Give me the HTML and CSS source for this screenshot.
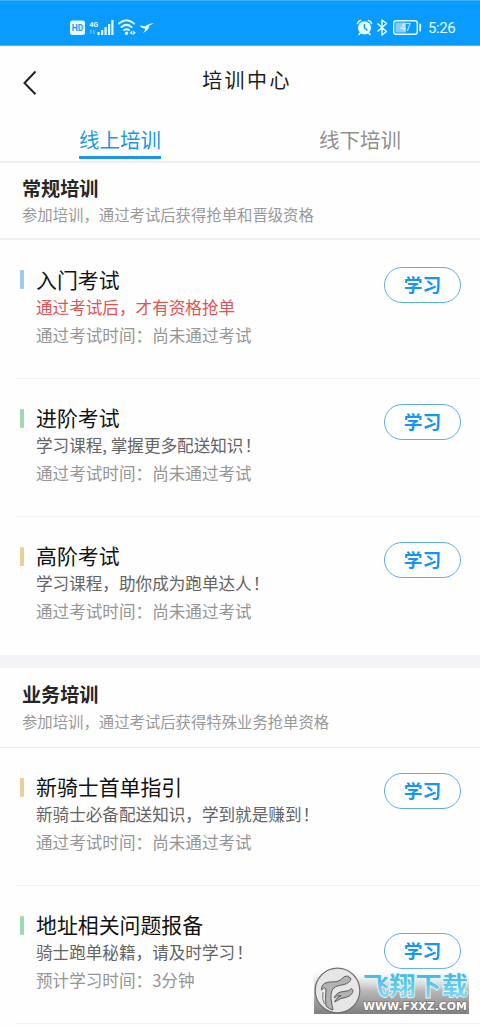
FILE: index.html
```html
<!DOCTYPE html>
<html lang="zh-CN">
<head>
<meta charset="utf-8">
<title>培训中心</title>
<link rel="stylesheet" href="styles.css">
</head>
<body>
<div class="status">
  <div class="status-left">
    <svg width="90" height="20" viewBox="0 0 90 20">
      <rect x="0" y="2.500" width="15" height="14.500" rx="2.500" fill="#e4fbff"/>
      <text x="7.500" y="13.400" class="hd" text-anchor="middle" textLength="11.500" lengthAdjust="spacingAndGlyphs">HD</text>
      <text x="19.500" y="8.800" class="net" textLength="8.500" lengthAdjust="spacingAndGlyphs">4G</text>
      <path d="M21 12v4M20 13l1-1M24 12v4M24 16l1-1" stroke="#7cccff" stroke-width="1" fill="none"/>
      <g fill="#e4fbff"><rect x="27.500" y="14" width="2.200" height="3"/><rect x="31" y="12" width="2.200" height="5"/><rect x="34.500" y="9" width="2.200" height="8"/><rect x="38" y="6" width="2.200" height="11"/><rect x="41.300" y="2" width="2.200" height="15"/></g>
      <g fill="none" stroke="#e4fbff" stroke-width="2" stroke-linecap="round"><path d="M49 5.500Q56.500-1 64 5.500"/><path d="M51.500 9Q56.500 4.800 61.500 9"/><path d="M54 12Q56.500 10.300 59 12"/></g>
      <circle cx="56.500" cy="15.300" r="1.700" fill="#e4fbff"/>
      <path d="M62.300 12.500v4.500l-2.500-2.200zM63.300 12.500v4.500l2.500-2.200z" fill="#e4fbff"/>
      <path d="M69.500 7.500l6 .8Q78 5.500 84 5.200L79.500 7.500Q78.800 12 73 15Q75.500 12 75 10.500Q71 10 69.500 7.500z" fill="#e4fbff"/>
    </svg>
  </div>
  <div class="status-right">
    <svg width="66" height="20" viewBox="0 0 66 20">
      <circle cx="8.500" cy="9.800" r="6.600" fill="#e4fbff"/>
      <path d="M1.500 5.500Q2 3 4.500 2.500M12.500 2.500Q15 3 15.500 5.500M4.500 14.800l-1.500 1.700M12.500 14.800l1.500 1.700" stroke="#e4fbff" stroke-width="1.600" fill="none" stroke-linecap="round"/>
      <path d="M8.500 6v4l3 2.500" stroke="#109cff" stroke-width="1.500" fill="none"/>
      <path d="M21.500 5.500l9 8-4.500 3.500V2l4.500 3.500L21.500 13.500" stroke="#e4fbff" stroke-width="1.500" fill="none" stroke-linejoin="round"/>
      <rect x="37.700" y="2.700" width="23.600" height="13.600" rx="2.500" fill="none" stroke="#e4fbff" stroke-width="1.400"/>
      <rect x="39.500" y="4.500" width="10.500" height="10" fill="#83ceff"/>
      <rect x="63.300" y="5.500" width="1.800" height="8" rx=".7" fill="#e4fbff"/>
      <text x="49.500" y="13.300" class="level" text-anchor="middle" textLength="10.500" lengthAdjust="spacingAndGlyphs">47</text>
    </svg>
    <span class="clock">5:26</span>
  </div>
</div>

<header class="header">
  <svg class="back" width="14" height="26" viewBox="0 0 14 26"><path d="M12.500 1.500L1.500 13l11 11.300" fill="none" stroke="#222" stroke-width="2"/></svg>
  <h1 class="page-title">培训中心</h1>
</header>
<nav class="tabs">
  <div class="tab-cell"><span class="tab active">线上培训</span></div>
  <div class="tab-cell"><span class="tab">线下培训</span></div>
</nav>

<section class="section">
  <div class="section-head">
    <h2>常规培训</h2>
    <p>参加培训，通过考试后获得抢单和晋级资格</p>
  </div>
  <article class="item loose">
    <i class="mark blue"></i>
    <div class="info"><h3>入门考试</h3><p class="sub alert">通过考试后，才有资格抢单</p><p class="time">通过考试时间：尚未通过考试</p></div>
    <button class="study">学习</button>
  </article>
  <article class="item">
    <i class="mark green"></i>
    <div class="info"><h3>进阶考试</h3><p class="sub">学习课程, 掌握更多配送知识<span class="bang">！</span></p><p class="time">通过考试时间：尚未通过考试</p></div>
    <button class="study">学习</button>
  </article>
  <article class="item last">
    <i class="mark orange"></i>
    <div class="info"><h3>高阶考试</h3><p class="sub">学习课程，助你成为跑单达人<span class="bang">！</span></p><p class="time">通过考试时间：尚未通过考试</p></div>
    <button class="study">学习</button>
  </article>
</section>

<section class="section business">
  <div class="section-head">
    <h2>业务培训</h2>
    <p>参加培训，通过考试后获得特殊业务抢单资格</p>
  </div>
  <article class="item">
    <i class="mark orange"></i>
    <div class="info"><h3>新骑士首单指引</h3><p class="sub">新骑士必备配送知识，学到就是赚到<span class="bang">！</span></p><p class="time">通过考试时间：尚未通过考试</p></div>
    <button class="study">学习</button>
  </article>
  <article class="item low">
    <i class="mark green"></i>
    <div class="info"><h3>地址相关问题报备</h3><p class="sub">骑士跑单秘籍，请及时学习<span class="bang">！</span></p><p class="time">预计学习时间：3分钟</p></div>
    <button class="study">学习</button>
  </article>
</section>

<aside class="watermark">
  <svg width="155" height="47" viewBox="0 0 155 47">
    <defs>
      <linearGradient id="shade" x1="0" y1="0" x2="0" y2="1"><stop offset="0" stop-color="#fff" stop-opacity="0"/><stop offset=".5" stop-color="#b9b9b9"/><stop offset="1" stop-color="#7f7f7f"/></linearGradient>
      <linearGradient id="sky" x1="0" y1="0" x2="0" y2="1"><stop offset=".15" stop-color="#3fb4de"/><stop offset="1" stop-color="#92dff5"/></linearGradient>
    </defs>
    <rect width="155" height="47" fill="url(#shade)"/>
    <circle cx="23.500" cy="23.500" r="22.300" fill="#e6e6e6" stroke="#707070" stroke-width="1.200"/>
    <path d="M7.500 23Q7 17 13 15.500C19 14 24 16 28 11.500Q30 9 33.500 9L37 11.500Q36 16 30 17.500C22 19 19 20 17.500 25C16 31 18 37 19 43Q15 42 12 39Q11 31 12 24Q12 18 7.500 23z" fill="#b2b2b2" stroke="#5d5d5d" stroke-width="1"/>
    <path d="M9 25Q7.500 32 10.500 37" fill="none" stroke="#777" stroke-width="1"/>
    <path d="M20 31Q23 24.500 30 24.500Q35 24.500 37.500 21.500L39 23.500Q38.500 28 33 30Q26 31 20.500 35Q22 31 27 28.500Q22 28.500 20 31z" fill="#b2b2b2" stroke="#5d5d5d" stroke-width="1"/>
    <text x="49" y="28.200" class="wm-name" textLength="105" lengthAdjust="spacingAndGlyphs">飞翔下载</text>
    <text x="49" y="43.300" class="wm-url" textLength="104" lengthAdjust="spacingAndGlyphs">WWW.FXXZ.COM</text>
  </svg>
</aside>
</body>
</html>
```
FILE: styles.css
```css
* { box-sizing: border-box; margin: 0; padding: 0; }
body {
  position: relative;
  width: 480px;
  height: 1026px;
  overflow: hidden;
  background: #fefefe;
  font-family: "Noto Sans CJK SC", sans-serif;
}
svg { display: block; }
.status {
  height: 46px;
  padding: 17px 23px 0 70px;
  display: flex;
  justify-content: space-between;
  background: #0a9bff;
  border-top: 1px solid #3bb2f5;
  border-bottom: 1px solid #48b1fa;
}
.status-right { display: flex; gap: 5px; }
.hd { font: bold 9.5px Roboto, sans-serif; fill: #159cf5; }
.net { font: bold 8px Roboto, sans-serif; fill: #e4fbff; }
.level { font: 10px Roboto, sans-serif; fill: #e4fbff; }
.clock {
  width: 30px;
  padding-left: 1px;
  font: 15px/21px Roboto, sans-serif;
  letter-spacing: -.4px;
  color: #e4fbff;
}

.header {
  height: 70px;
  display: grid;
  grid-template-columns: 60px 1fr 60px;
}
.back { margin: 24px 0 0 23px; }
.page-title {
  margin: 16px 0 0 14px;
  text-align: center;
  font-size: 20px;
  font-weight: 400;
  letter-spacing: 2.4px;
  line-height: 35px;
  color: #1c1c1c;
}
.tabs {
  height: 47px;
  display: grid;
  grid-template-columns: 1fr 1fr;
  border-bottom: 2px solid #f0f0f0;
}
.tab-cell { display: flex; justify-content: center; }
.tab {
  height: 43px;
  padding: 8px 0 0;
  font-size: 20.5px;
  line-height: 30px;
  color: #909090;
}
.tab.active { color: #1a97ea; border-bottom: 3px solid #1a97ea; }

.section-head {
  height: 77px;
  padding: 11px 22px 0;
  border-bottom: 2px solid #efefef;
}
.section-head h2 {
  font-size: 19.1px;
  font-weight: 700;
  line-height: 28px;
  color: #262626;
}
.section-head p {
  font-size: 15.37px;
  line-height: 24px;
  color: #999;
}
.business { border-top: 13px solid #f3f3f8; }
.business .section-head { height: 80px; padding-top: 12px; border-bottom: 1px solid #e8e8e8; }
.business .section-head p { line-height: 27px; }

.item {
  height: 138px;
  margin-left: 16px;
  padding: 24px 19px 0 4px;
  display: flex;
  align-items: flex-start;
  border-bottom: 1px solid #f1f1f1;
}
.item.loose { height: 139px; }
.item.last { border-bottom: 0; }
.mark { flex: none; width: 4px; height: 19px; margin: 6px 12px 0 0; border-radius: 1px; }
.blue { background: #9ecbe9; }
.green { background: #a0d8b6; }
.orange { background: #edcf98; }
.info { flex: 1; white-space: nowrap; }
.info h3 { font-size: 20.9px; font-weight: 400; line-height: 28px; color: #111; }
.info p { font-size: 16.6px; }
.sub { line-height: 29px; color: #646464; }
.time { line-height: 27px; color: #959595; }
.info .alert { color: #e15353; }
.loose .info { padding-top: 1px; }
.bang { margin-left: 1px; }
.study {
  width: 77px;
  height: 36px;
  margin-top: 1px;
  border: 1px solid #5aaeea;
  border-radius: 18px;
  background: #fff;
  font: 700 18.7px/30px "Noto Sans CJK SC", sans-serif;
  padding-bottom: 3px;
  color: #1695f3;
}
.loose .study { margin-top: 3px; }
.low .study { margin-top: 23px; }

.watermark { position: absolute; left: 314px; top: 967px; }
.wm-name {
  font: 700 25px "Noto Sans CJK SC", sans-serif;
  fill: url(#sky);
  stroke: #e9fbff;
  stroke-width: 1.5px;
  paint-order: stroke;
}
.wm-url {
  font: bold 11px "DejaVu Sans", sans-serif;
  fill: #fff;
  stroke: #666;
  stroke-width: 1px;
  paint-order: stroke;
}
```
